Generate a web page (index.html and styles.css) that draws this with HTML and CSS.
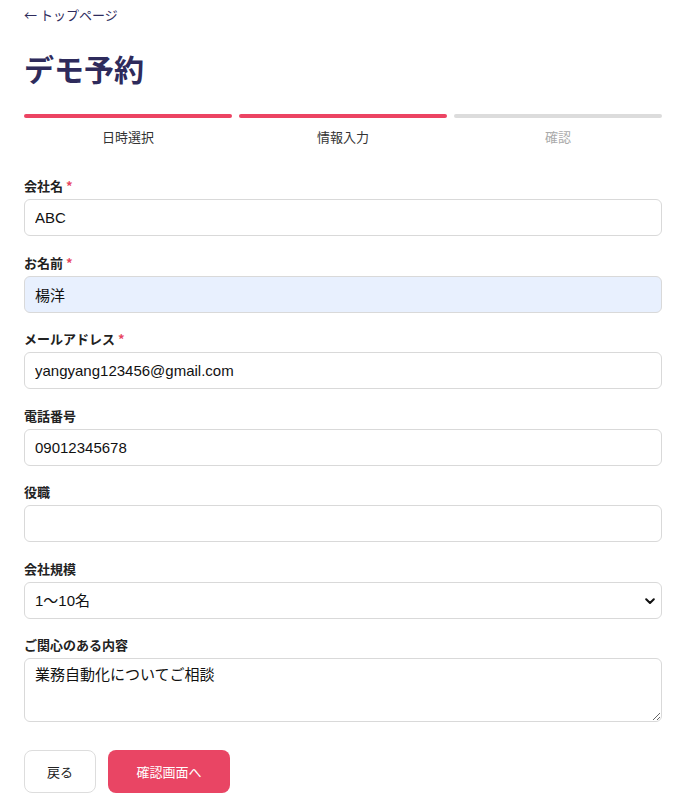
FILE: index.html
```html
<!DOCTYPE html>
<html lang="ja">
<head>
  <meta charset="UTF-8" />
  <title>デモ予約</title>
  <link rel="stylesheet" href="styles.css">
</head>
<body>
  <div class="page">
    <a class="back-link" href="#">← トップページ</a>
    <h1 class="title">デモ予約</h1>

    <div class="steps">
      <div class="step done"><span class="bar"></span><span class="step-label">日時選択</span></div>
      <div class="step done"><span class="bar"></span><span class="step-label">情報入力</span></div>
      <div class="step"><span class="bar"></span><span class="step-label">確認</span></div>
    </div>

    <form class="form">
      <div class="field">
        <label>会社名 <span class="req">*</span></label>
        <input type="text" value="ABC" />
      </div>
      <div class="field">
        <label>お名前 <span class="req">*</span></label>
        <input type="text" class="autofill" value="楊洋" />
      </div>
      <div class="field">
        <label>メールアドレス <span class="req">*</span></label>
        <input type="text" value="yangyang123456@gmail.com" />
      </div>
      <div class="field">
        <label>電話番号</label>
        <input type="text" value="09012345678" />
      </div>
      <div class="field">
        <label>役職</label>
        <input type="text" value="" />
      </div>
      <div class="field">
        <label>会社規模</label>
        <div class="select-wrap">
          <select>
            <option>1〜10名</option>
            <option>11〜50名</option>
            <option>51〜100名</option>
          </select>
          <svg class="chevron" width="10" height="7" viewBox="0 0 10 7"><path d="M1.2 1.2 L5 5 L8.8 1.2" fill="none" stroke="#111" stroke-width="2" stroke-linecap="round" stroke-linejoin="round"/></svg>
        </div>
      </div>
      <div class="field">
        <label>ご関心のある内容</label>
        <textarea>業務自動化についてご相談</textarea>
      </div>

      <div class="buttons">
        <button type="button" class="btn-back">戻る</button>
        <button type="button" class="btn-next">確認画面へ</button>
      </div>
    </form>
  </div>
</body>
</html>
```

FILE: styles.css
```css
body { margin: 0; background: #fff; font-family: "Noto Sans CJK JP", "Liberation Sans", sans-serif; color: #222; }
.page { padding: 1px 25px 16px 24px; }

.back-link { display: inline-block; font-size: 13px; line-height: 20px; color: #2e2b5c; text-decoration: none; }
.title { margin: 22px 0 0; font-size: 30px; line-height: 42px; font-weight: 700; color: #2e2b5c; }

.steps { display: flex; gap: 7px; margin-top: 25px; }
.step { flex: 1; display: flex; flex-direction: column; align-items: center; }
.bar { display: block; width: 100%; height: 4px; border-radius: 2px; background: #dcdcdc; }
.step.done .bar { background: #ec4463; }
.step-label { margin-top: 10px; font-size: 13px; line-height: 18px; color: #aaa; }
.step.done .step-label { color: #333; }

.form { margin-top: 31px; }
.field { margin-bottom: 17.5px; }
.field label { display: block; margin-bottom: 4px; font-size: 13px; line-height: 18px; font-weight: 700; color: #222; }
.req { color: #e8475f; }

input, select, textarea { display: block; box-sizing: border-box; width: 100%; border: 1px solid #d9d9d9; border-radius: 6px; background: #fff; color: #111; font-family: "Liberation Sans", "Noto Sans CJK JP", sans-serif; font-size: 15px; outline: none; }
input { height: 37px; padding: 0 10px; }
input.autofill { background: #e8f0fe; }

.select-wrap { position: relative; }
select { height: 37px; padding: 0 10px; appearance: none; -webkit-appearance: none; }
.chevron { position: absolute; right: 7px; top: 16px; pointer-events: none; }

textarea { height: 64px; padding: 6px 10px; resize: vertical; line-height: 20px; }

.buttons { display: flex; gap: 12px; margin-top: 28px; }
.buttons button { height: 43px; border-radius: 8px; font-family: "Noto Sans CJK JP", sans-serif; font-size: 13px; cursor: pointer; }
.btn-back { width: 72px; background: #fff; border: 1px solid #ddd; color: #222; }
.btn-next { width: 122px; background: #e94564; border: none; color: #fff; }
```
